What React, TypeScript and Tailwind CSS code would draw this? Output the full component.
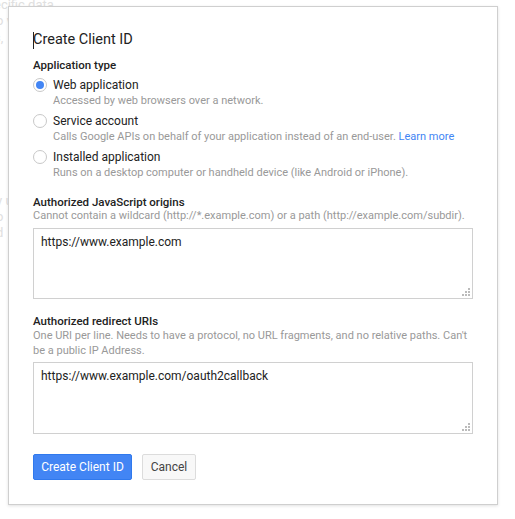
import React from "react"

const font = { fontFamily: "Roboto, 'Liberation Sans', sans-serif" }

function Radio({ checked }: { checked?: boolean }) {
  return (
    <span className="mt-[1px] flex h-[14px] w-[14px] shrink-0 items-center justify-center rounded-full border border-[#c8c8c8] bg-white">
      {checked && <span className="h-[8px] w-[8px] rounded-full bg-[#4285f4]" />}
    </span>
  )
}

function Option({ title, desc, checked }: { title: string; desc: React.ReactNode; checked?: boolean }) {
  return (
    <div className="flex gap-[6px]">
      <Radio checked={checked} />
      <div>
        <div className="text-[12px] leading-[16px] text-[#222]">{title}</div>
        <div className="text-[11px] leading-[15px] text-[#999]">{desc}</div>
      </div>
    </div>
  )
}

function Area({ value, h }: { value: string; h: string }) {
  return (
    <div className={`relative ${h} border border-[#d0d0d0] bg-white px-[7px] py-[5px] text-[12px] leading-[16px] text-[#222]`}>
      {value}
      <svg className="absolute bottom-[2px] right-[2px]" width="8" height="8" viewBox="0 0 8 8">
        <rect x="6" y="0" width="2" height="2" fill="#bbb" />
        <rect x="3" y="3" width="2" height="2" fill="#bbb" />
        <rect x="6" y="3" width="2" height="2" fill="#bbb" />
        <rect x="0" y="6" width="2" height="2" fill="#bbb" />
        <rect x="3" y="6" width="2" height="2" fill="#bbb" />
        <rect x="6" y="6" width="2" height="2" fill="#bbb" />
      </svg>
    </div>
  )
}

export default function App() {
  return (
    <div className="relative h-[519px] w-[515px] overflow-hidden bg-white" style={font}>
      {/* faded page behind the dialog */}
      <div className="text-[13px] leading-[16px] text-[#e0e0e0]">
        <div className="-ml-[6px] -mt-[3px]">ecific data</div>
        <div className="-ml-[4px] mt-[0px]">o w</div>
        <div className="-ml-[6px] mt-[1px]">s,</div>
        <div className="-ml-[4px] mt-[147px]">y u</div>
        <div className="-ml-[4px]">o</div>
        <div className="-ml-[4px]">d</div>
      </div>

      <div className="absolute left-[8px] top-[6px] w-[490px] border border-[#cfcfcf] bg-white px-[24px] pb-[24px] pt-[23px] shadow-[0_1px_3px_rgba(0,0,0,0.12)]">
        <div className="flex items-center text-[14.5px] leading-[20px] text-[#222]">
          <span className="mr-[-1px] inline-block h-[17px] w-[1px] bg-[#222]" />
          Create Client ID
        </div>

        <div className="mt-[8px] text-[11.5px] font-medium leading-[15px] text-[#222]">Application type</div>
        <div className="mt-[4px] flex flex-col gap-[5px]">
          <Option checked title="Web application" desc="Accessed by web browsers over a network." />
          <Option
            title="Service account"
            desc={
              <>
                Calls Google APIs on behalf of your application instead of an end-user.{" "}
                <span className="text-[#4285f4]">Learn more</span>
              </>
            }
          />
          <Option
            title="Installed application"
            desc="Runs on a desktop computer or handheld device (like Android or iPhone)."
          />
        </div>

        <div className="mt-[15px] text-[11.5px] font-medium leading-[14px] text-[#222]">Authorized JavaScript origins</div>
        <div className="text-[11px] leading-[14px] text-[#999]">
          Cannot contain a wildcard (http://*.example.com) or a path (http://example.com/subdir).
        </div>
        <div className="mt-[5px]">
          <Area value="https://www.example.com" h="h-[71px]" />
        </div>

        <div className="mt-[15px] text-[11.5px] font-medium leading-[14px] text-[#222]">Authorized redirect URIs</div>
        <div className="text-[11px] leading-[15px] text-[#999]">
          One URI per line. Needs to have a protocol, no URL fragments, and no relative paths. Can't be a public IP Address.
        </div>
        <div className="mt-[4px]">
          <Area value="https://www.example.com/oauth2callback" h="h-[72px]" />
        </div>

        <div className="mt-[20px] flex gap-[10px]">
          <button className="h-[26px] w-[99px] rounded-[2px] border border-[#3079ed] bg-[#4285f4] text-[12px] text-white">
            Create Client ID
          </button>
          <button className="h-[26px] w-[54px] rounded-[2px] border border-[#dcdcdc] bg-[#f8f8f8] text-[12px] text-[#444]">
            Cancel
          </button>
        </div>
      </div>
    </div>
  )
}
